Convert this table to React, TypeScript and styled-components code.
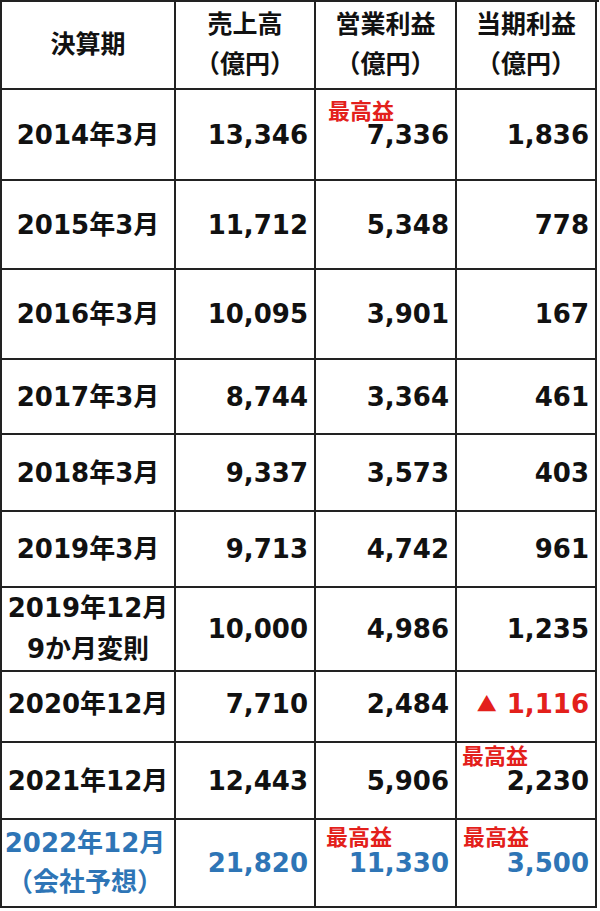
import React from 'react';
import styled, { createGlobalStyle } from 'styled-components';

const GlobalStyle = createGlobalStyle`
  html, body { margin: 0; padding: 0; background: #ffffff; }
  body { font-family: "DejaVu Sans", "Noto Sans CJK JP", sans-serif; }
`;

const LINE = '#222222';
const BLUE = '#2e75b6';
const RED = '#e3201b';

const Table = styled.div`
  width: 597px;
  border-top: 2px solid ${LINE};
  border-left: 2px solid ${LINE};
  display: flex;
  flex-direction: column;
  font-family: "DejaVu Sans", "Noto Sans CJK JP", sans-serif;
  font-weight: 700;
  font-size: 26px;
  color: #111111;
  font-feature-settings: "halt";
`;

const Row = styled.div<{ $h: number }>`
  display: grid;
  grid-template-columns: 174px 140px 141px 140px;
  height: ${p => p.$h}px;
`;

const Cell = styled.div<{ $align: 'center' | 'right'; $color?: string }>`
  box-sizing: border-box;
  position: relative;
  display: flex;
  align-items: center;
  justify-content: ${p => (p.$align === 'center' ? 'center' : 'flex-end')};
  padding-right: ${p => (p.$align === 'right' ? '6px' : '0')};
  border-right: 2px solid ${LINE};
  border-bottom: 2px solid ${LINE};
  color: ${p => p.$color || '#111111'};
  white-space: nowrap;
`;

const Lines = styled.div<{ $lh: number; $size?: number; $shift?: number }>`
  display: flex;
  flex-direction: column;
  align-items: center;
  line-height: ${p => p.$lh}px;
  font-size: ${p => p.$size || 26}px;
  margin-left: ${p => p.$shift || 0}px;
`;

const Num = styled.span`
  line-height: 30px;
`;

const Badge = styled.span<{ $top: number; $left: number }>`
  position: absolute;
  top: ${p => p.$top}px;
  left: ${p => p.$left}px;
  font-family: "Noto Sans CJK JP", sans-serif;
  font-size: 22px;
  line-height: 22px;
  font-weight: 700;
  color: ${RED};
`;

const Neg = styled.span`
  color: ${RED};
  line-height: 30px;
  display: inline-flex;
  align-items: center;
`;

const Tri = styled.span`
  font-family: "Noto Sans CJK JP", sans-serif;
  font-size: 20px;
  margin-right: 10px;
`;

type BadgePos = { top: number; left: number };
type RowData = {
  period: string[];
  lh?: number;
  shift?: number;
  h: number;
  sales: string;
  op: string;
  net: string;
  negative?: boolean;
  blue?: boolean;
  opBadge?: BadgePos;
  netBadge?: BadgePos;
};

const rows: RowData[] = [
  { period: ['2014年3月'], h: 91, sales: '13,346', op: '7,336', net: '1,836', opBadge: { top: 8, left: 12 } },
  { period: ['2015年3月'], h: 89, sales: '11,712', op: '5,348', net: '778' },
  { period: ['2016年3月'], h: 90, sales: '10,095', op: '3,901', net: '167' },
  { period: ['2017年3月'], h: 75, sales: '8,744', op: '3,364', net: '461' },
  { period: ['2018年3月'], h: 77, sales: '9,337', op: '3,573', net: '403' },
  { period: ['2019年3月'], h: 76, sales: '9,713', op: '4,742', net: '961' },
  { period: ['2019年12月', '9か月変則'], lh: 41, h: 78, sales: '10,000', op: '4,986', net: '1,235' },
  { period: ['2020年12月'], h: 77, sales: '7,710', op: '2,484', net: '1,116', negative: true },
  { period: ['2021年12月'], h: 77, sales: '12,443', op: '5,906', net: '2,230', netBadge: { top: 0, left: 5 } },
  {
    period: ['2022年12月', '（会社予想）'],
    lh: 39,
    shift: -6,
    h: 88,
    sales: '21,820',
    op: '11,330',
    net: '3,500',
    blue: true,
    opBadge: { top: 4, left: 10 },
    netBadge: { top: 4, left: 6 },
  },
];

const headers = [['決算期'], ['売上高', '（億円）'], ['営業利益', '（億円）'], ['当期利益', '（億円）']];

export default function App() {
  return (
    <>
      <GlobalStyle />
      <Table>
        <Row $h={88}>
          {headers.map((h, i) => (
            <Cell key={i} $align="center">
              <Lines $lh={40} $size={25}>
                {h.map(t => (
                  <span key={t}>{t}</span>
                ))}
              </Lines>
            </Cell>
          ))}
        </Row>
        {rows.map(r => {
          const color = r.blue ? BLUE : undefined;
          return (
            <Row key={r.period[0]} $h={r.h}>
              <Cell $align="center" $color={color}>
                <Lines $lh={r.lh || 30} $shift={r.shift}>
                  {r.period.map(t => (
                    <span key={t}>{t}</span>
                  ))}
                </Lines>
              </Cell>
              <Cell $align="right" $color={color}>
                <Num>{r.sales}</Num>
              </Cell>
              <Cell $align="right" $color={color}>
                {r.opBadge && (
                  <Badge $top={r.opBadge.top} $left={r.opBadge.left}>
                    最高益
                  </Badge>
                )}
                <Num>{r.op}</Num>
              </Cell>
              <Cell $align="right" $color={color}>
                {r.netBadge && (
                  <Badge $top={r.netBadge.top} $left={r.netBadge.left}>
                    最高益
                  </Badge>
                )}
                {r.negative ? (
                  <Neg>
                    <Tri>▲</Tri>
                    {r.net}
                  </Neg>
                ) : (
                  <Num>{r.net}</Num>
                )}
              </Cell>
            </Row>
          );
        })}
      </Table>
    </>
  );
}
